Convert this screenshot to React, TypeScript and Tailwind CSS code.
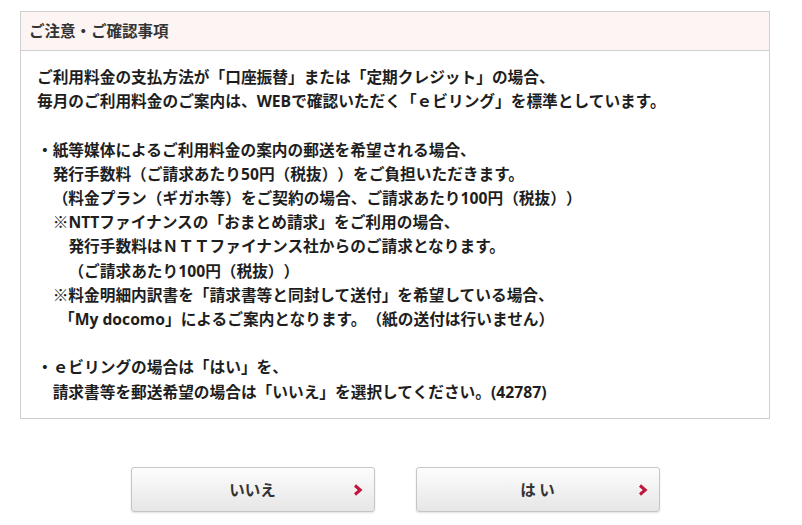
import { ReactNode } from "react";

function Line({ indent = "", children }: { indent?: string; children: ReactNode }) {
  return <div className={`whitespace-nowrap ${indent}`}>{children}</div>;
}

// Latin runs are a bit wider in the original, so give them a wider face
function L({ children }: { children: ReactNode }) {
  return <span className="font-['Open_Sans','Noto_Sans_CJK_JP',sans-serif]">{children}</span>;
}

function Chevron() {
  return (
    <svg width="10" height="12" viewBox="0 0 10 12" className="shrink-0">
      <path d="M2 1.5 L7.2 6 L2 10.5" fill="none" stroke="#c3133d" strokeWidth="3" strokeLinejoin="miter" />
    </svg>
  );
}

function NavButton({ label }: { label: string }) {
  return (
    <button className="relative w-[244px] h-[45px] rounded-[3px] border border-[#c6c6c6] bg-gradient-to-b from-[#fdfdfd] to-[#e6e6e6] shadow-[0_1px_2px_rgba(0,0,0,0.12)] flex items-center justify-center text-[15.5px] font-bold text-[#333]">
      <span className="whitespace-pre">{label}</span>
      <span className="absolute right-[11px] top-[16px]">
        <Chevron />
      </span>
    </button>
  );
}

export default function App() {
  return (
    <div className="w-[802px] h-[525px] bg-white font-['Noto_Sans_CJK_JP',sans-serif] text-[#1e1e1e] overflow-hidden [text-spacing-trim:space-all]">
      <div className="pt-[11px] pl-[20px] w-[770px]">
        {/* Notice box */}
        <div className="border border-[#cfcfcf]">
          <div className="h-[39px] bg-[#fcf5f3] border-b border-[#cfcfcf] pl-[8px] flex items-center text-[15.5px] font-bold text-[#333]">
            ご注意・ご確認事項
          </div>
          <div className="pl-[16px] pt-[14px] pb-[14px] text-[15.7px] leading-[24.2px] font-bold">
            <Line>ご利用料金の支払方法が「口座振替」または「定期クレジット」の場合、</Line>
            <Line>毎月のご利用料金のご案内は、<L>WEB</L>で確認いただく「ｅビリング」を標準としています。</Line>
            <Line>&nbsp;</Line>
            <Line>・紙等媒体によるご利用料金の案内の郵送を希望される場合、</Line>
            <Line indent="pl-[1em]">発行手数料（ご請求あたり<L>50</L>円（税抜））をご負担いただきます。</Line>
            <Line indent="pl-[1em]">（料金プラン（ギガホ等）をご契約の場合、ご請求あたり<L>100</L>円（税抜））</Line>
            <Line indent="pl-[1em]">※<L>NTT</L>ファイナンスの「おまとめ請求」をご利用の場合、</Line>
            <Line indent="pl-[2em]">発行手数料はＮＴＴファイナンス社からのご請求となります。</Line>
            <Line indent="pl-[2em]">（ご請求あたり<L>100</L>円（税抜））</Line>
            <Line indent="pl-[1em]">※料金明細内訳書を「請求書等と同封して送付」を希望している場合、</Line>
            <Line indent="pl-[1.4em]">「<L>My docomo</L>」によるご案内となります。（紙の送付は行いません）</Line>
            <Line>&nbsp;</Line>
            <Line>・ｅビリングの場合は「はい」を、</Line>
            <Line indent="pl-[1em]">請求書等を郵送希望の場合は「いいえ」を選択してください。<L>(42787)</L></Line>
          </div>
        </div>

        {/* Buttons */}
        <div className="mt-[48px] flex justify-center gap-[41px]">
          <NavButton label="いいえ" />
          <NavButton label="は い" />
        </div>
      </div>
    </div>
  );
}
